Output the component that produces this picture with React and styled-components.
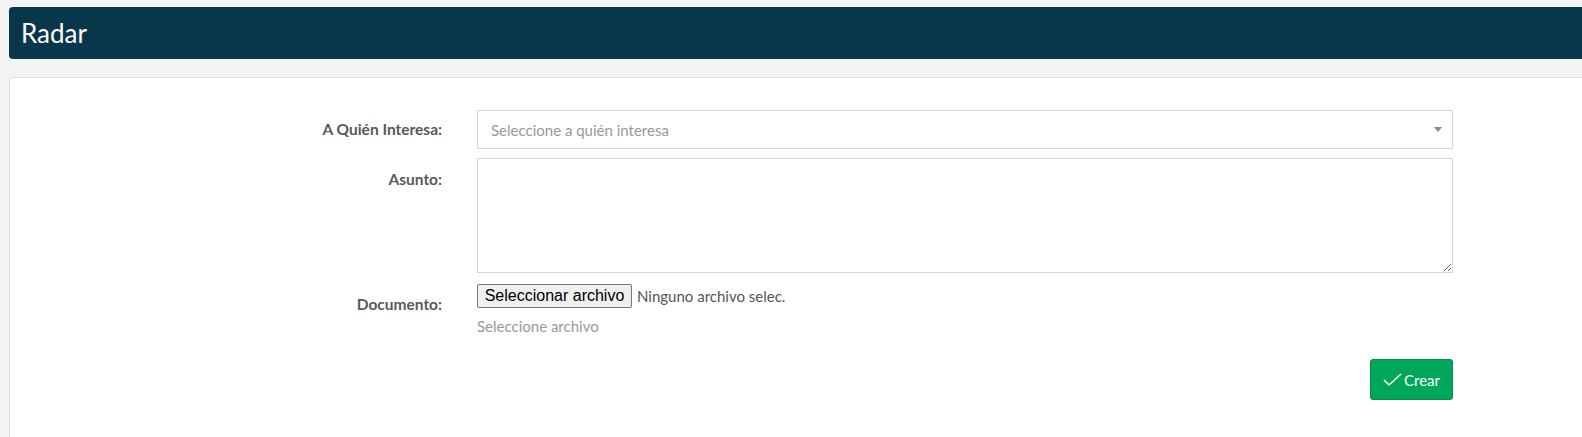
import React from "react"
import styled, { createGlobalStyle } from "styled-components"

const Global = createGlobalStyle`
  html, body {
    margin: 0;
    padding: 0;
    background: #f3f3f3;
  }
  body {
    font-family: Lato, "Liberation Sans", sans-serif;
  }
`

const Page = styled.div`
  height: 437px;
  box-sizing: border-box;
  padding: 7px 0 0 9px;
  display: flex;
  flex-direction: column;
  gap: 18px;
`

const Header = styled.div`
  flex: none;
  height: 52px;
  background: #08364a;
  border-radius: 4px 0 0 4px;
  display: flex;
  align-items: center;
  padding-left: 12px;
  color: #fff;
  font-size: 26px;
`

const Card = styled.div`
  flex: 1;
  background: #fff;
  border: 1px solid #d3e3ee;
  border-right: none;
  border-bottom: none;
  border-radius: 4px 0 0 0;
  padding-top: 32px;
`

const Form = styled.div`
  display: grid;
  grid-template-columns: 432px 976px;
  column-gap: 35px;
  row-gap: 9px;
  align-items: start;
`

const Label = styled.label`
  text-align: right;
  font-size: 15.5px;
  font-weight: bold;
  color: #595959;
  padding-top: ${p => p.$top || 10}px;
`

const Select = styled.div`
  height: 39px;
  box-sizing: border-box;
  border: 1px solid #d2d6de;
  display: flex;
  align-items: center;
  justify-content: space-between;
  padding: 0 10px 0 13px;
  font-size: 15px;
  color: #999;
`

const Caret = styled.span`
  width: 0;
  height: 0;
  border-left: 4px solid transparent;
  border-right: 4px solid transparent;
  border-top: 5px solid #888;
`

const Area = styled.textarea`
  height: 115px;
  box-sizing: border-box;
  border: 1px solid #d2d6de;
  margin: 0;
  display: block;
  width: 100%;
  resize: vertical;
`

const FileBox = styled.div`
  display: flex;
  flex-direction: column;
  gap: 9px;
  padding-top: 2px;
`

const FileRow = styled.div`
  display: flex;
  align-items: center;
  gap: 5px;
  font-size: 15px;
  color: #555;
`

const FileButton = styled.button`
  font-family: "Liberation Sans", Arial, sans-serif;
  font-size: 16px;
  color: #000;
  background: #efefef;
  border: 1px solid #767676;
  border-radius: 2px;
  height: 24px;
  width: 155px;
  padding: 0;
`

const Help = styled.div`
  font-size: 15px;
  color: #999;
`

const Actions = styled.div`
  grid-column: 2;
  display: flex;
  justify-content: flex-end;
  padding-top: 15px;
`

const Button = styled.button`
  height: 41px;
  width: 83px;
  background: #00a65a;
  border: 1px solid #008d4c;
  border-radius: 3px;
  color: #fff;
  font-family: inherit;
  font-size: 15px;
  display: flex;
  align-items: center;
  justify-content: center;
  gap: 1px;
`

export default function App() {
  return (
    <>
      <Global />
      <Page>
        <Header>Radar</Header>
        <Card>
          <Form>
            <Label>A Quién Interesa:</Label>
            <Select>
              Seleccione a quién interesa
              <Caret />
            </Select>
            <Label $top={12}>Asunto:</Label>
            <Area />
            <Label $top={13}>Documento:</Label>
            <FileBox>
              <FileRow>
                <FileButton>Seleccionar archivo</FileButton>
                Ninguno archivo selec.
              </FileRow>
              <Help>Seleccione archivo</Help>
            </FileBox>
            <Actions>
              <Button>
                <svg width="20" height="16" viewBox="0 0 20 16" fill="none" stroke="#fff" strokeWidth="1.6">
                  <path d="M1 8 L6 13 L18 2" />
                </svg>
                Crear
              </Button>
            </Actions>
          </Form>
        </Card>
      </Page>
    </>
  )
}
